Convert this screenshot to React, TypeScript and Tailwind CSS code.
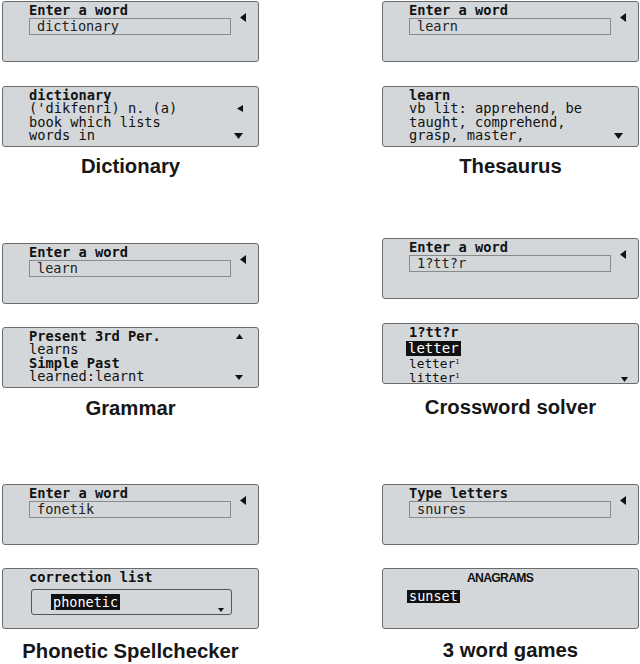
import type { ReactNode } from "react";

const mono = "font-['DejaVu_Sans_Mono',monospace]";

function LeftArrow({ w = 6, h = 9 }: { w?: number; h?: number }) {
  return (
    <svg width={w} height={h} viewBox={`0 0 ${w} ${h}`} className="block">
      <polygon points={`${w},0 0,${h / 2} ${w},${h}`} fill="#111" />
    </svg>
  );
}

function DownArrow({ w = 9, h = 6 }: { w?: number; h?: number }) {
  return (
    <svg width={w} height={h} viewBox={`0 0 ${w} ${h}`} className="block">
      <polygon points={`0,0 ${w},0 ${w / 2},${h}`} fill="#111" />
    </svg>
  );
}

function UpArrow({ w = 8, h = 6 }: { w?: number; h?: number }) {
  return (
    <svg width={w} height={h} viewBox={`0 0 ${w} ${h}`} className="block">
      <polygon points={`0,${h} ${w},${h} ${w / 2},0`} fill="#111" />
    </svg>
  );
}

function InputPanel({ title, value }: { title: string; value: string }) {
  return (
    <div className={`flex h-[61px] rounded-[3px] border border-[#6b6b6b] bg-[#d4d7d9] ${mono}`}>
      <div className="ml-[26px] w-[202px] pt-[1px]">
        <div className="text-[13.7px] leading-[15px] font-bold text-[#111]">{title}</div>
        <div className="h-[17px] border border-[#8a8a8a] pl-[7px] text-[13.6px] leading-[15px] text-[#222]">
          {value}
        </div>
      </div>
      <div className="ml-auto mr-[12px] mt-[11px]">
        <LeftArrow />
      </div>
    </div>
  );
}

function ResultPanel({ children }: { children: ReactNode }) {
  return (
    <div
      className={`h-[61px] rounded-[3px] border border-[#6b6b6b] bg-[#d4d7d9] pl-[26px] pr-[15px] pt-[1.5px] text-[13.7px] text-[#111] ${mono}`}
    >
      {children}
    </div>
  );
}

function Line({ children, bold, arrow }: { children: ReactNode; bold?: boolean; arrow?: ReactNode }) {
  return (
    <div className={`flex h-[13.6px] items-center justify-between leading-[13.6px] ${bold ? "font-bold" : ""}`}>
      <span className="whitespace-pre">{children}</span>
      {arrow}
    </div>
  );
}

function Label({ children }: { children: ReactNode }) {
  return (
    <div className="text-center font-['Liberation_Sans',Arial,sans-serif] text-[20.3px] leading-[24px] font-bold text-[#161616]">
      {children}
    </div>
  );
}

function Sup() {
  return <span className="relative -top-[4px] text-[7px]">1</span>;
}

export default function App() {
  return (
    <div className="flex h-[664px] w-[640px] gap-[123px] bg-white pl-[2px]">
      {/* left column */}
      <div className="flex w-[257px] flex-col">
        <div className="mt-[1px]">
          <InputPanel title="Enter a word" value="dictionary" />
        </div>
        <div className="mt-[24px]">
          <ResultPanel>
            <Line bold>dictionary</Line>
            <Line arrow={<LeftArrow w={6} h={7} />}>('dikfenri) n. (a)</Line>
            <Line>book which lists</Line>
            <Line arrow={<DownArrow />}>words in</Line>
          </ResultPanel>
        </div>
        <div className="mt-[7px]">
          <Label>Dictionary</Label>
        </div>

        <div className="mt-[65px]">
          <InputPanel title="Enter a word" value="learn" />
        </div>
        <div className="mt-[23px]">
          <ResultPanel>
            <Line bold arrow={<UpArrow w={7} h={5} />}>
              Present 3rd Per.
            </Line>
            <Line>learns</Line>
            <Line bold>Simple Past</Line>
            <Line arrow={<DownArrow w={8} h={5} />}>learned:learnt</Line>
          </ResultPanel>
        </div>
        <div className="mt-[8px]">
          <Label>Grammar</Label>
        </div>

        <div className="mt-[64px]">
          <InputPanel title="Enter a word" value="fonetik" />
        </div>
        <div className="mt-[23px]">
          <ResultPanel>
            <Line bold>correction list</Line>
            <div className="mt-[5px] ml-[2px] flex h-[26px] w-[201px] justify-between rounded-[3px] border border-[#555] pl-[19px] pr-[7px] pt-[4px]">
              <span className="h-[16px] bg-[#111] px-[2px] text-[13.5px] leading-[16px] text-white">phonetic</span>
              <div className="mt-[14px]">
                <DownArrow w={6} h={4} />
              </div>
            </div>
          </ResultPanel>
        </div>
        <div className="mt-[10px]">
          <Label>Phonetic Spellchecker</Label>
        </div>
      </div>

      {/* right column */}
      <div className="flex w-[257px] flex-col">
        <div className="mt-[1px]">
          <InputPanel title="Enter a word" value="learn" />
        </div>
        <div className="mt-[24px]">
          <ResultPanel>
            <Line bold>learn</Line>
            <Line>vb lit: apprehend, be</Line>
            <Line>taught, comprehend,</Line>
            <Line arrow={<DownArrow />}>grasp, master,</Line>
          </ResultPanel>
        </div>
        <div className="mt-[7px]">
          <Label>Thesaurus</Label>
        </div>

        <div className="mt-[60px]">
          <InputPanel title="Enter a word" value="1?tt?r" />
        </div>
        <div className="mt-[24px]">
          <div
            className={`h-[61px] rounded-[3px] border border-[#6b6b6b] bg-[#d4d7d9] pl-[26px] pr-[10px] pt-[1.5px] text-[#111] ${mono}`}
          >
            <div className="text-[13.7px] leading-[13.6px] font-bold">1?tt?r</div>
            <div className="mt-[2px] -ml-[3px] flex">
              <span className="h-[15px] bg-[#111] px-[2px] text-[14px] leading-[15px] text-white">letter</span>
            </div>
            <div className="mt-[1.7px] text-[12.8px] leading-[11.3px]">
              letter
              <Sup />
            </div>
            <div className="flex items-center justify-between text-[12.8px] leading-[11.3px]">
              <span>
                litter
                <Sup />
              </span>
              <DownArrow w={7} h={5} />
            </div>
          </div>
        </div>
        <div className="mt-[11px]">
          <Label>Crossword solver</Label>
        </div>

        <div className="mt-[65px]">
          <InputPanel title="Type letters" value="snures" />
        </div>
        <div className="mt-[23px]">
          <ResultPanel>
            <div className="mt-[1px] ml-[58px] font-['Liberation_Sans',Arial,sans-serif] text-[12.2px] leading-[13.6px] font-bold tracking-[-0.7px]">
              ANAGRAMS
            </div>
            <div className="mt-[4.6px] -ml-[2px] flex">
              <span className="h-[13px] bg-[#111] px-[2px] text-[13.5px] leading-[13px] text-white">sunset</span>
            </div>
          </ResultPanel>
        </div>
        <div className="mt-[9px]">
          <Label>3 word games</Label>
        </div>
      </div>
    </div>
  );
}
